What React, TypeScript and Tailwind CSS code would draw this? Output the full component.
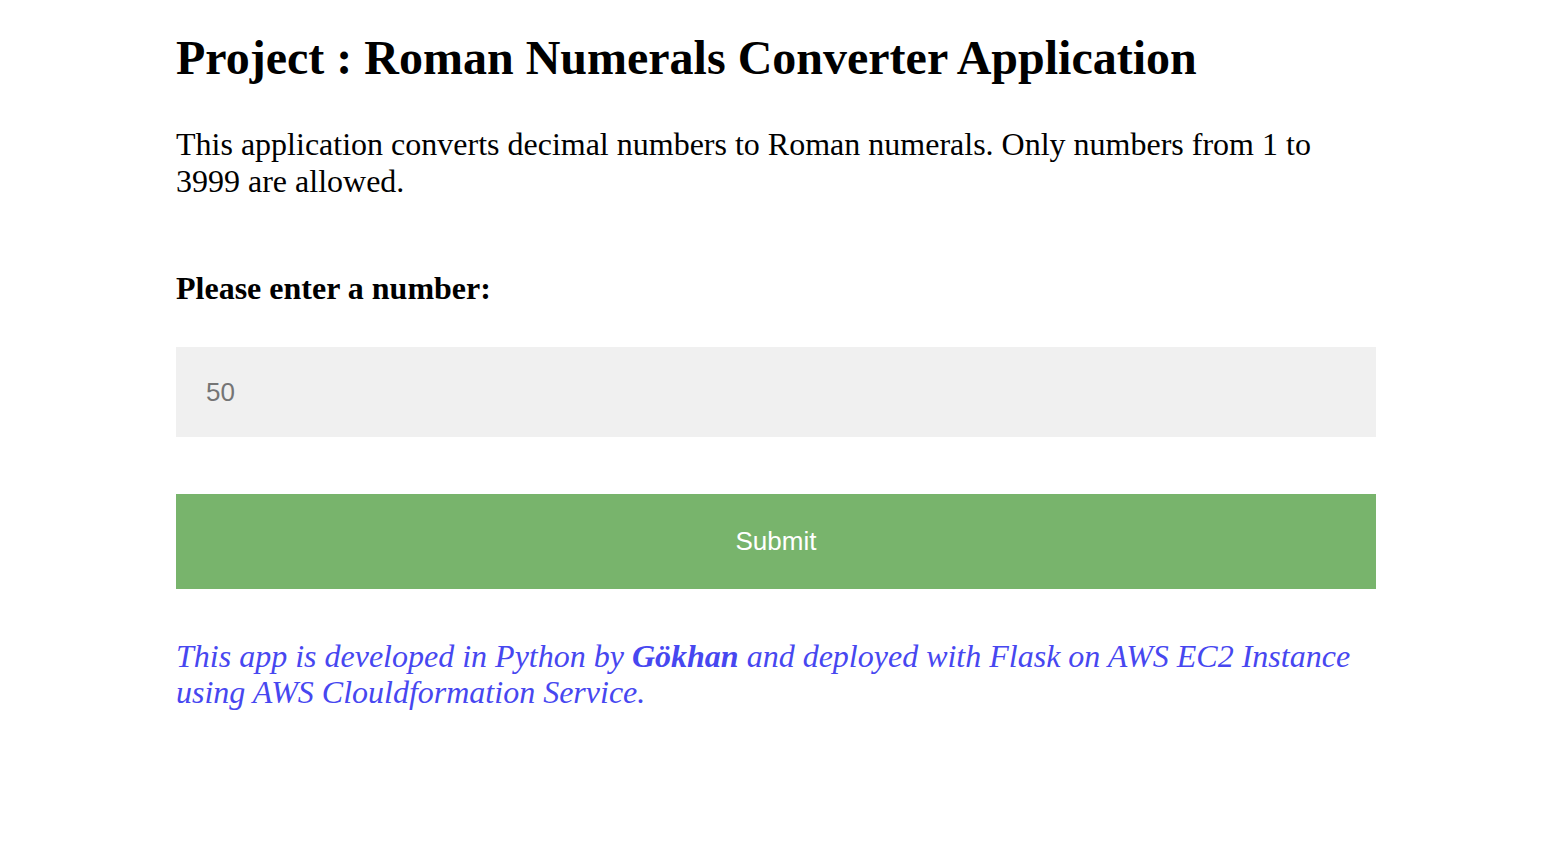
export default function App() {
  return (
    <div className="min-h-screen bg-white">
      <div className="ml-[176px] w-[1200px] font-['Liberation_Serif','Times_New_Roman',serif] text-black">
        <h1 className="pt-[30px] text-[48px] font-bold leading-[55px]">
          Project : Roman Numerals Converter Application
        </h1>
        <p className="mt-[41px] text-[32px] leading-[37px]">
          This application converts decimal numbers to Roman numerals. Only numbers from 1 to 3999 are allowed.
        </p>
        <form className="mt-[70px]" onSubmit={(e) => e.preventDefault()}>
          <label className="block text-[32px] font-bold leading-[37px]">Please enter a number:</label>
          <input
            type="text"
            placeholder="50"
            className="mt-[40px] block h-[90px] w-full bg-[#f0f0f0] px-[30px] font-['Liberation_Sans',Arial,sans-serif] text-[26px] text-black outline-none placeholder:text-[#757575]"
          />
          <button
            type="submit"
            className="mt-[57px] block h-[95px] w-full bg-[#78b46c] font-['Liberation_Sans',Arial,sans-serif] text-[26px] text-white"
          >
            Submit
          </button>
        </form>
        <p className="mt-[49px] text-[32px] italic leading-[36px] text-[#4747f0]">
          This app is developed in Python by <b>Gökhan</b> and deployed with Flask on AWS EC2 Instance using AWS Clouldformation Service.
        </p>
      </div>
    </div>
  );
}
